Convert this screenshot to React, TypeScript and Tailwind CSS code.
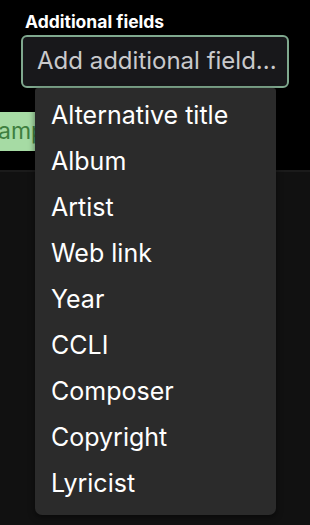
const FIELDS = [
  'Alternative title',
  'Album',
  'Artist',
  'Web link',
  'Year',
  'CCLI',
  'Composer',
  'Copyright',
  'Lyricist',
];

export default function App() {
  return (
    <div className="relative h-[525px] w-[310px] overflow-hidden bg-black font-['Inter',sans-serif] text-white">
      {/* top section */}
      <div className="h-[170px] bg-black">
        <div className="px-[21px] pt-[12px]">
          <p className="pl-[4px] text-[17.5px] font-bold leading-[20px]">Additional fields</p>
          <div className="mt-[3px] flex h-[53px] items-center overflow-hidden rounded-[6px] border-2 border-[#7fa88e] bg-[#18181b] pb-[2px] pl-[14px] pr-[4px]">
            <span className="whitespace-nowrap text-[24px] leading-none text-[#c9c9cc]">Add additional field...</span>
          </div>
        </div>
        <div className="mt-[24px] flex">
          <span className="flex h-[39px] w-[35px] items-center overflow-hidden whitespace-nowrap bg-[#a6dba4] text-[23px] text-[#3f7f3f]">
            <span className="-ml-[2px]">amp</span>
          </span>
        </div>
      </div>
      {/* lower section */}
      <div className="h-[355px] border-t-2 border-[#1b1b1b] bg-[#111111]" />

      {/* dropdown */}
      <div className="absolute left-[35px] top-[88px] w-[241px] rounded-b-[7px] rounded-t-[3px] bg-[#2b2b2b] pb-[8px] pt-[5px] shadow-[0_2px_6px_rgba(0,0,0,0.5)]">
        {FIELDS.map((f) => (
          <div key={f} className="flex h-[46px] items-center px-[16px] text-[25px] text-white">
            {f}
          </div>
        ))}
      </div>
    </div>
  );
}
